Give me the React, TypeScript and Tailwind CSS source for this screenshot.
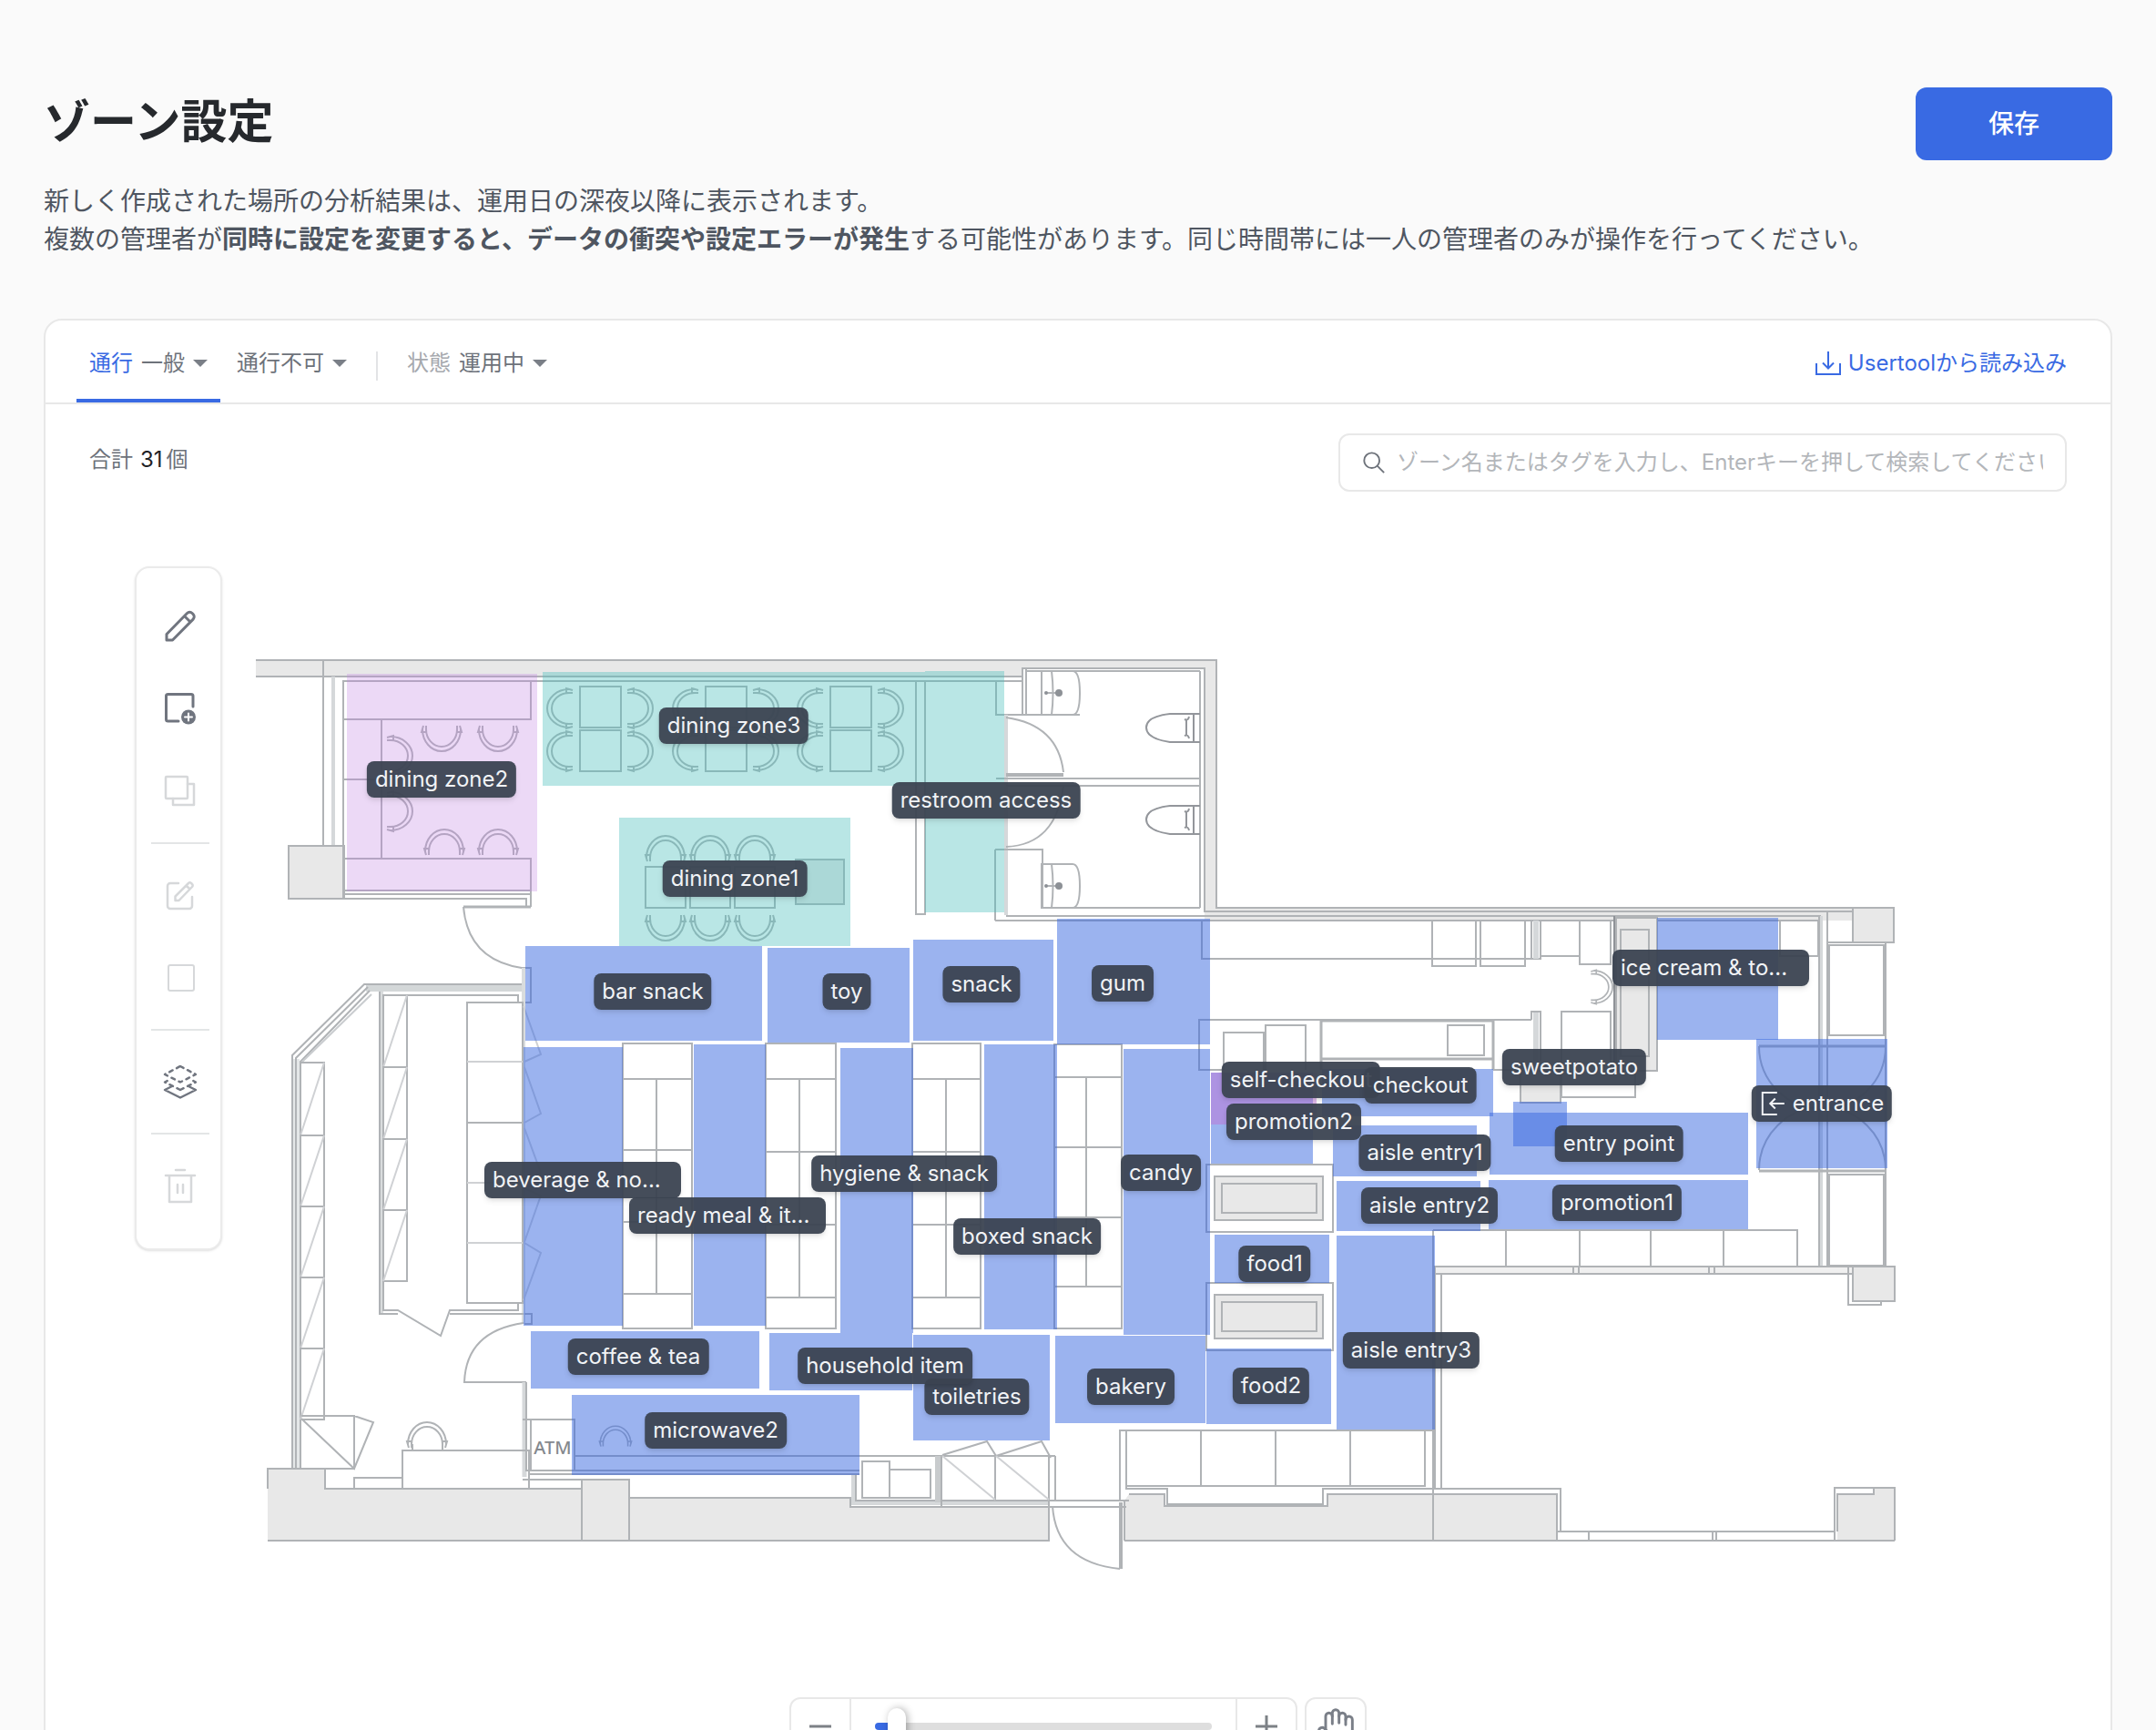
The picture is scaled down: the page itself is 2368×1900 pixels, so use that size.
import { useState, type ReactNode } from "react";
import { Hand } from "lucide-react";
import clsx from "clsx";

// Plan coordinates: the floor plan, the zones and the labels all share this origin.
const ORIGIN_X = 274;
const ORIGIN_Y = 700;

type Tone = "blue" | "pink" | "teal" | "violet";

type Zone = {
  name: string;
  tone: Tone;
  // left, top, right, bottom
  box: [number, number, number, number];
  // centre of the label
  label: [number, number];
  entrance?: boolean;
};

const ZONES: Zone[] = [
  { name: "dining zone2", tone: "pink", box: [381, 740, 590, 979], label: [485, 856] },
  { name: "dining zone3", tone: "teal", box: [596, 738, 1016, 863], label: [806, 797] },
  { name: "dining zone1", tone: "teal", box: [680, 898, 934, 1039], label: [807, 965] },
  { name: "restroom access", tone: "teal", box: [1016, 737, 1103, 1002], label: [1083, 879] },
  { name: "bar snack", tone: "blue", box: [577, 1039, 837, 1143], label: [717, 1089] },
  { name: "toy", tone: "blue", box: [843, 1041, 999, 1145], label: [930, 1089] },
  { name: "snack", tone: "blue", box: [1003, 1032, 1157, 1143], label: [1078, 1081] },
  { name: "gum", tone: "blue", box: [1161, 1009, 1329, 1147], label: [1233, 1080] },
  { name: "beverage & noodle", tone: "blue", box: [575, 1150, 684, 1456], label: [640, 1296] },
  { name: "ready meal & items", tone: "blue", box: [762, 1147, 841, 1456], label: [799, 1335] },
  { name: "hygiene & snack", tone: "blue", box: [923, 1151, 1003, 1464], label: [993, 1289] },
  { name: "boxed snack", tone: "blue", box: [1081, 1147, 1161, 1460], label: [1128, 1358] },
  { name: "candy", tone: "blue", box: [1234, 1152, 1329, 1466], label: [1275, 1288] },
  { name: "coffee & tea", tone: "blue", box: [583, 1462, 834, 1525], label: [701, 1490] },
  { name: "toiletries", tone: "blue", box: [1003, 1466, 1153, 1582], label: [1073, 1534] },
  { name: "household item", tone: "blue", box: [845, 1464, 1002, 1527], label: [972, 1500] },
  { name: "bakery", tone: "blue", box: [1159, 1467, 1324, 1563], label: [1242, 1523] },
  { name: "microwave2", tone: "blue", box: [628, 1532, 944, 1620], label: [786, 1571] },
  { name: "food1", tone: "blue", box: [1334, 1356, 1460, 1409], label: [1400, 1388] },
  { name: "food2", tone: "blue", box: [1325, 1481, 1462, 1564], label: [1396, 1522] },
  { name: "aisle entry3", tone: "blue", box: [1468, 1357, 1576, 1570], label: [1550, 1483] },
  { name: "promotion2", tone: "blue", box: [1330, 1178, 1442, 1278], label: [1421, 1232] },
  { name: "self-checkout", tone: "violet", box: [1330, 1178, 1446, 1235], label: [1429, 1186] },
  { name: "checkout", tone: "blue", box: [1452, 1174, 1640, 1226], label: [1560, 1192] },
  { name: "aisle entry1", tone: "blue", box: [1464, 1236, 1622, 1292], label: [1565, 1266] },
  { name: "aisle entry2", tone: "blue", box: [1468, 1297, 1626, 1352], label: [1570, 1324] },
  { name: "sweetpotato", tone: "blue", box: [1662, 1210, 1721, 1259], label: [1729, 1172] },
  { name: "entry point", tone: "blue", box: [1636, 1222, 1920, 1290], label: [1778, 1256] },
  { name: "promotion1", tone: "blue", box: [1635, 1296, 1920, 1350], label: [1776, 1321] },
  { name: "ice cream & topping", tone: "blue", box: [1820, 1008, 1953, 1142], label: [1879, 1063] },
  { name: "entrance", tone: "blue", box: [1929, 1141, 2073, 1283], label: [2001, 1212], entrance: true },
];

// Long names are cut on the map.
const SHORT_NAMES: Record<string, string> = {
  "beverage & noodle": "beverage & no...",
  "ready meal & items": "ready meal & it...",
  "ice cream & topping": "ice cream & to...",
};

const TONE_CLASS: Record<Tone, string> = {
  blue: "fill-[#3867df]/50",
  pink: "fill-[#c080e0]/30",
  teal: "fill-[#50c0be]/40",
  violet: "fill-[#bf74d6]/50",
};

function Chair({ x, y, turn, size = 1 }: { x: number; y: number; turn: number; size?: number }) {
  return (
    <g transform={`translate(${x} ${y}) rotate(${turn}) scale(${size})`}>
      <path d="M-21 2A21 24 0 0 0 21 2M-17 2A17 19 0 0 0 17 2M-17-2V5H-22L-20-2M17-2V5H22L20-2" />
    </g>
  );
}

function Box({ b, solid }: { b: [number, number, number, number]; solid?: boolean }) {
  return (
    <rect
      x={b[0]}
      y={b[1]}
      width={b[2] - b[0]}
      height={b[3] - b[1]}
      className={solid ? "fill-[#e8e8e8]" : undefined}
    />
  );
}

/** A column of shelf cells, each with its diagonal. */
function Shelf({ left, right, rows }: { left: number; right: number; rows: number[] }) {
  return (
    <>
      {rows.slice(1).map((bottom, i) => (
        <g key={bottom}>
          <Box b={[left, rows[i], right, bottom]} />
          <path className="stroke-[#cfd1d4]" d={`M${left} ${bottom}L${right} ${rows[i]}`} />
        </g>
      ))}
    </>
  );
}

function Gondola({ left, right, mid, rows }: { left: number; right: number; mid: number; rows: number[] }) {
  const last = rows.length - 1;
  return (
    <>
      <Box b={[left, rows[0], right, rows[last]]} />
      {rows.slice(1, last).map((y) => (
        <path key={y} d={`M${left} ${y}H${right}`} />
      ))}
      <path d={`M${mid} ${rows[1]}V${rows[last - 1]}`} />
    </>
  );
}

function Sink({ y }: { y: number }) {
  return (
    <g>
      <path d={`M1144 ${y}H1178Q1186 ${y} 1186 ${y + 24}T1178 ${y + 48}H1144ZM1155 ${y}Q1158 ${y + 24} 1155 ${y + 48}`} />
      <path d={`M1149 ${y + 24}H1163`} />
      <circle cx="1163" cy={y + 24} r="4" className="fill-[#8d9196] stroke-none" />
      <circle cx="1149" cy={y + 24} r="2" className="fill-[#8d9196] stroke-none" />
    </g>
  );
}

function Toilet({ y }: { y: number }) {
  return (
    <path
      className="stroke-[#93969b]"
      d={`M1318 ${y - 15}H1285Q1259 ${y - 12} 1259 ${y}T1285 ${y + 16}H1318M1311 ${y - 15}V${y + 16}M1301 ${y - 9}Q1305 ${y - 7} 1306 ${y - 12}M1301 ${y + 9}Q1305 ${y + 7} 1306 ${y + 12}M1303 ${y - 8}V${y + 8}`}
    />
  );
}

function FloorPlan() {
  return (
    <g className="fill-none stroke-[#b0b3b6]" strokeWidth="2">
      {/* outer walls */}
      <g className="fill-[#e8e8e8] stroke-none">
        <path d="M281 725H1336V997H2080V1011H1323V734H1123V743H281Z" />
        <path d="M294 1613H357V1635H639V1625H691V1645H934V1655H1152V1692H294Z" />
        <path d="M1235 1692V1648L1240 1641H1279V1654H1458V1641H1710V1692Z" />
        <path d="M2018 1641H2058V1634H2081V1691H2018Z" />
      </g>
      <path d="M281 725H1336V997H2080M281 743H1123V734H1323V1001H2036M1318 737V997M1127 737H1318M1145 997H1318M355 725V929M1105 1006H2000M1093 1011H2000" />
      <path className="stroke-[#d5d8da]" strokeWidth="4" d="M366 743V929" />
      <Box b={[317, 929, 378, 987]} solid />

      {/* dining room, left */}
      <path d="M377 987V748H1123M377 982H583M377 987H578V996M583 943V996M419 790V943M377 856H419" />
      <Box b={[377, 748, 583, 790]} />
      <Box b={[377, 943, 583, 978]} />
      <path strokeWidth="3" d="M509 996H583" />
      <path d="M509 996Q514 1054 573 1063H583V1101H573" />
      <Chair x={485} y={799} turn={0} />
      <Chair x={547} y={799} turn={0} />
      <Chair x={488} y={937} turn={180} />
      <Chair x={547} y={937} turn={180} />
      <Chair x={427} y={830} turn={-90} />
      <Chair x={427} y={891} turn={-90} />

      {/* dining room, top */}
      {[637, 775, 912].map((x) => (
        <g key={x}>
          <Box b={[x, 754, x + 45, 799]} />
          <Box b={[x, 802, x + 45, 847]} />
          <Chair x={x - 10} y={778} turn={90} />
          <Chair x={x - 10} y={825} turn={90} />
          <Chair x={x + 54} y={778} turn={-90} />
          <Chair x={x + 54} y={825} turn={-90} />
        </g>
      ))}
      {[709, 758, 807].map((x) => (
        <g key={x}>
          <Box b={[x, 952, x + 44, 997]} />
          <Chair x={x + 22} y={944} turn={180} />
          <Chair x={x + 22} y={1007} turn={0} />
        </g>
      ))}
      <Box b={[874, 944, 927, 993]} solid />
      <Box b={[1006, 748, 1016, 1004]} />

      {/* restrooms */}
      <path d="M1094 748V785H1186M1123 734V785M1127 734V785M1144 737V785" />
      <Sink y={737} />
      <Sink y={949} />
      <Toilet y={799} />
      <Toilet y={900} />
      <path className="stroke-[#d5d8da]" strokeWidth="4" d="M1105 785V1005" />
      <path d="M1105 788Q1162 796 1168 848M1094 855H1318M1105 863H1318M1168 863Q1160 928 1105 930" />
      <path strokeWidth="4" d="M1105 851H1168" />
      <path d="M1093 933H1145V997M1093 933V1011" />

      {/* back room */}
      <path className="stroke-[#d3d7d8]" strokeWidth="8" d="M574 1085H402" />
      <path className="stroke-[#e4e7e8]" strokeWidth="8" d="M325 1163V1613" />
      <path d="M321 1613V1159L400 1081H574M404 1084L325 1162V1613M406 1088L330 1166V1613" />
      <path className="stroke-[#c9cccf]" d="M408 1092L330 1168" />
      <path className="stroke-[#d9dcdd]" strokeWidth="4" d="M419 1089V1443M575 1063V1454" />
      <path d="M417 1089V1443H437M421 1093V1439H437L484 1467L494 1439H569V1432M494 1443H575M421 1093H569V1101" />
      <Shelf left={330} right={356} rows={[1167, 1247, 1325, 1403, 1481, 1559]} />
      <Shelf left={421} right={447} rows={[1093, 1172, 1251, 1329, 1407]} />
      <path d="M331 1555H389V1613H331M389 1555L410 1562L389 1613L331 1558" />
      <Box b={[513, 1101, 574, 1431]} />
      <path className="stroke-[#cfd1d4]" d="M513 1166H574M513 1299H574M513 1365H574M575 1105L594 1158L576 1166M576 1172L594 1223L576 1233M576 1239L594 1288L576 1299M576 1305L594 1313L576 1364M576 1365L594 1376L575 1428" />
      <path d="M513 1233H574M576 1443H584V1454H576M575 1453Q512 1462 510 1518H578" />
      <path className="stroke-[#d5d8da]" strokeWidth="5" d="M576 1518V1622" />
      <path d="M578 1518V1615H944M574 1559H583M580 1619H944M574 1625H639" />
      <Box b={[583, 1559, 631, 1615]} />
      <text
        x="607"
        y="1597"
        textAnchor="middle"
        className="fill-[#85898e] stroke-none font-['Noto_Sans',sans-serif] text-[20px] font-medium"
      >
        ATM
      </text>
      <Chair x={469} y={1588} turn={180} />
      <path d="M453 1586V1593M486 1586V1593" />
      <Chair x={676} y={1587} turn={180} size={0.8} />
      <path d="M442 1635V1593H581V1635M389 1635V1623H442M631 1599H1159" />

      {/* lower wall */}
      <path d="M294 1635V1613H357V1635H639V1625H691V1645H934V1655H1237M294 1692H1152V1650M639 1625V1692M691 1645V1692M940 1618V1648H1240" />
      <path className="stroke-[#d5d8da]" strokeWidth="4" d="M937 1620V1651H1152" />
      <Box b={[947, 1605, 977, 1645]} />
      <Box b={[977, 1614, 1022, 1645]} />
      <path className="stroke-[#c8cbcd]" strokeWidth="6" d="M1030 1599V1650" />
      <path d="M1034 1599V1655M1093 1599V1647M1152 1599V1655M1159 1599V1648M1035 1598L1084 1583L1094 1599L1144 1583L1154 1601" />
      <path className="stroke-[#cfd1d4]" d="M1035 1599L1093 1647M1094 1599L1152 1647" />
      <path d="M1156 1654Q1160 1716 1230 1723M1230 1650V1723M1232 1650V1723" />
      <path d="M1230 1648V1571H1574M1237 1571V1635H1282V1652H1453V1635H1714V1682M1237 1632H1566M1319 1571V1632M1401 1571V1632M1483 1571V1632M1565 1571V1632" />
      <path d="M1235 1692V1648M1240 1641H1279V1654H1458V1641H1710V1692M1235 1692H2081M1574 1635V1692M1710 1682H2015M1745 1682V1692M1881 1682V1692M1885 1682V1692" />
      <path d="M2015 1692V1634H2081V1692M2018 1682V1641H2058V1634" />

      {/* gondolas */}
      <Gondola left={684} right={760} mid={721} rows={[1146, 1185, 1263, 1342, 1421, 1459]} />
      <Gondola left={841} right={918} mid={878} rows={[1146, 1185, 1265, 1345, 1425, 1459]} />
      <Gondola left={1002} right={1077} mid={1039} rows={[1146, 1185, 1265, 1345, 1425, 1459]} />
      <Gondola left={1158} right={1232} mid={1193} rows={[1147, 1183, 1260, 1337, 1413, 1459]} />

      {/* counters */}
      <path d="M1320 1011V1053H1692V1011" />
      <Box b={[1573, 1011, 1621, 1061]} />
      <Box b={[1626, 1011, 1675, 1061]} />
      <path className="stroke-[#d5d8da]" strokeWidth="6" d="M1687 1011V1053M1687 1111V1165" />
      <path d="M1682 1011V1053M1692 1011V1050H1735M1735 1011V1059H1769V1011M1682 1120V1111H1692V1165" />
      <rect x="1775" y="1008" width="45" height="168" className="fill-[#e8e8e8]" />
      <Box b={[1780, 1021, 1811, 1160]} />
      <path className="stroke-[#8f9297]" d="M1773 1006V1176" />
      <Chair x={1749} y={1084} turn={-90} size={0.85} />
      <path d="M1715 1205V1111H1769V1176M1715 1205H1796V1176" />
      <Box b={[1670, 1176, 1714, 1211]} solid />
      <path d="M1682 1120H1317V1175H1342M1640 1175H1670" />
      <path d="M1344 1175V1134H1388V1175M1390 1175V1126H1434V1175" />
      <path strokeWidth="3" d="M1451 1175V1121H1640V1175M1451 1163H1640" />
      <Box b={[1590, 1126, 1630, 1159]} />
      {[1279, 1409].map((y) => (
        <g key={y}>
          <Box b={[1325, y, 1464, y + 74]} />
          <Box b={[1334, y + 13, 1453, y + 61]} solid />
          <Box b={[1342, y + 21, 1446, y + 53]} solid />
        </g>
      ))}

      {/* entrance side */}
      <path className="stroke-[#d5d8da]" strokeWidth="4" d="M2000 1006V1399" />
      <path d="M1955 1011V1050H1997V1011M1998 1006V1399M2007 1000V1391M2007 1035H2071V1391" />
      <Box b={[2035, 997, 2080, 1035]} solid />
      <Box b={[2009, 1038, 2069, 1137]} />
      <Box b={[2009, 1290, 2069, 1390]} />
      <path strokeWidth="3" d="M1932 1149H2072M1932 1286H2072" />
      <path d="M1932 1149A69 69 0 0 0 2001 1218M2071 1149A69 69 0 0 1 2002 1218M1932 1285A69 69 0 0 1 2001 1216M2071 1285A69 69 0 0 0 2002 1216" />
      <path d="M1574 1351H1974V1390M1654 1351V1390M1735 1351V1390M1813 1351V1390M1893 1351V1390M1574 1351V1692" />
      <rect x="1576" y="1391" width="459" height="8" className="fill-[#f0f0f0]" />
      <path d="M1728 1391V1399H1734V1391M1877 1391V1399H1883V1391M1576 1399V1635M1583 1399V1635M2030 1391V1433H2066V1429" />
      <Box b={[2035, 1391, 2081, 1429]} solid />
    </g>
  );
}

function ZoneLabel({ zone }: { zone: Zone }) {
  return (
    <button
      type="button"
      title={zone.name}
      className={clsx(
        "absolute flex h-10 -translate-x-1/2 -translate-y-1/2 items-center gap-2 rounded-lg bg-[#3b4351]/95 px-[9px] text-[24px] leading-10 whitespace-nowrap text-[#f1f3f6] shadow-md",
        SHORT_NAMES[zone.name] && "w-[216px]",
      )}
      style={{ left: zone.label[0] - ORIGIN_X, top: zone.label[1] - ORIGIN_Y }}
    >
      {zone.entrance && (
        <svg viewBox="0 0 28 28" className="size-7 fill-none stroke-current" strokeWidth="2">
          <path d="M19 2H3V26H19M27 14H12M17 8.500L11.500 14L17 19.500" />
        </svg>
      )}
      {SHORT_NAMES[zone.name] ?? zone.name}
    </button>
  );
}

function ToolButton({ label, muted, children }: { label: string; muted?: boolean; children: ReactNode }) {
  return (
    <button
      type="button"
      aria-label={label}
      disabled={muted}
      className={clsx("flex h-[70px] w-full items-center justify-center", muted ? "text-[#d6d8da]" : "text-[#70757f]")}
    >
      <svg
        viewBox="0 0 40 40"
        className="size-10 fill-none stroke-current"
        strokeWidth="2.500"
        strokeLinecap="round"
        strokeLinejoin="round"
      >
        {children}
      </svg>
    </button>
  );
}

function Toolbar() {
  return (
    <div className="absolute top-[82px] left-[98px] flex w-24 flex-col items-center gap-[21px] rounded-2xl border-2 border-[#ebebeb] bg-white pt-7 pb-[34px] pl-1 shadow-sm">
      <ToolButton label="描画">
        <path strokeWidth="3" d="M5 36V29.500L27.500 6.500a4 4 0 0 1 5.600 0l1 1a4 4 0 0 1 0 5.600L11.500 36ZM24.500 9.500l6.500 6.500" />
      </ToolButton>
      <ToolButton label="ゾーンを追加">
        <path strokeWidth="3" d="M18 34H6.500a2 2 0 0 1-2-2V6.500a2 2 0 0 1 2-2H32a2 2 0 0 1 2 2V18" />
        <circle cx="29" cy="29.500" r="8" className="fill-current stroke-none" />
        <path className="stroke-white" strokeWidth="2" d="M29 25.500V33.500M25 29.500H33" />
      </ToolButton>
      <ToolButton label="複製" muted>
        <rect x="4" y="4" width="24" height="24" rx="1" />
        <path d="M28 12H35V35H12V28" />
      </ToolButton>
      <hr className="w-16 border-t-2 border-[#e3e5e6]" />
      <ToolButton label="編集" muted>
        <path d="M18 7H9a3 3 0 0 0-3 3V32a3 3 0 0 0 3 3H30a3 3 0 0 0 3-3V22" />
        <path d="M14.500 26V21.500L29 7a2 2 0 0 1 3 0l1 1a2 2 0 0 1 0 3L18.500 26ZM26.500 9.500L30.500 13.500" />
      </ToolButton>
      <ToolButton label="選択" muted>
        <rect x="7" y="6" width="28" height="28" rx="2" strokeWidth="2" />
      </ToolButton>
      <hr className="w-16 border-t-2 border-[#e3e5e6]" />
      <ToolButton label="レイヤー">
        <path strokeDasharray="4 5" d="M20 3L37 12L20 20.500L3 12Z" />
        <path strokeDasharray="4 5" d="M20 29L3 20.500L9 17.500M20 29L37 20.500L31 17.500" />
        <path d="M10 25.500L3 29L20 37.500L37 29L30 25.500" />
      </ToolButton>
      <hr className="w-16 border-t-2 border-[#e3e5e6]" />
      <ToolButton label="削除" muted>
        <path d="M15 3H25M4 9H36M8 9V38H32V9M17 19V28M23 19V28" />
      </ToolButton>
    </div>
  );
}

function Caret() {
  return (
    <svg viewBox="0 0 16 8" className="h-2 w-4 fill-[#7a7f87]" aria-hidden="true">
      <path d="M0 0H16L8 8Z" />
    </svg>
  );
}

function Picker({ id, label, value, active }: { id: string; label?: string; value: string; active?: boolean }) {
  return (
    <div
      className={clsx(
        "flex items-center gap-[9px] border-b-4 px-3.5 pt-2",
        active ? "border-[#396ae3]" : "border-transparent",
      )}
    >
      {label && (
        <label htmlFor={id} className={active ? "text-[#396ae3]" : "text-[#a6a9ae]"}>
          {label}
        </label>
      )}
      <select
        id={id}
        aria-label={label ? undefined : value}
        className="appearance-none bg-transparent [field-sizing:content]"
      >
        <option>{value}</option>
      </select>
      <Caret />
    </div>
  );
}

export default function App() {
  const [zoom, setZoom] = useState(4);

  return (
    <main className="flex h-screen flex-col overflow-hidden bg-[#fafafa] px-12 pt-24 font-['Inter','Noto_Sans_CJK_JP',sans-serif] text-[24px] text-[#6d727a]">
      <header className="flex h-20 shrink-0 items-center justify-between">
        <h1 className="pb-1 text-[51px] font-bold text-[#26292d]">ゾーン設定</h1>
        <button type="button" className="h-20 w-[216px] rounded-xl bg-[#396ae3] text-[28px] font-medium text-white">
          保存
        </button>
      </header>
      <p className="mt-6 text-[28px] leading-[42px] text-[#4f5661]">
        新しく作成された場所の分析結果は、運用日の深夜以降に表示されます。
        <br />
        複数の管理者が<strong className="font-bold">同時に設定を変更すると、データの衝突や設定エラーが発生</strong>
        する可能性があります。同じ時間帯には一人の管理者のみが操作を行ってください。
      </p>

      <section className="mt-[66px] shrink-0 rounded-[20px] border-2 border-[#e8e8e8] bg-white">
        <nav className="flex h-[92px] items-stretch border-b-2 border-[#e8e8e8] pr-12 pl-[34px]">
          <Picker id="pass" label="通行" value="一般" active />
          <div className="ml-1 flex">
            <Picker id="blocked" value="通行不可" />
          </div>
          <div className="mx-[18px] mt-[34px] h-8 w-0.5 bg-[#e3e4e6]" />
          <Picker id="state" label="状態" value="運用中" />
          <a href="#import" className="ml-auto flex items-center gap-2 pt-1 text-[#396ae3]">
            <svg viewBox="0 0 28 28" className="size-7 fill-none stroke-current" strokeWidth="2">
              <path d="M1 14V26H27V14M14 1V19M8 13.500L14 19.500L20 13.500" />
            </svg>
            Usertoolから読み込み
          </a>
        </nav>

        <div className="flex items-start justify-between px-12 pt-8">
          <p className="flex leading-[58px]">
            合計<span className="mr-1 ml-2 text-[#1f2226]">31</span>個
          </p>
          <label className="flex h-16 w-[800px] items-center gap-3 rounded-xl border-2 border-[#e8e8e8] pr-6 pl-6">
            <svg viewBox="0 0 28 28" className="size-[26px] shrink-0 fill-none stroke-[#6d727a]" strokeWidth="2">
              <circle cx="11.500" cy="11.500" r="9" />
              <path d="M18 18L26 26" />
            </svg>
            <input
              type="text"
              aria-label="検索"
              placeholder="ゾーン名またはタグを入力し、Enterキーを押して検索してください"
              className="min-w-0 flex-1 outline-none placeholder:text-[#b3b6ba]"
            />
          </label>
        </div>

        <div className="relative pt-40">
          <div className="relative mx-auto h-[1040px] w-[1820px]">
            <svg viewBox={`${ORIGIN_X} ${ORIGIN_Y} 1820 1040`} className="h-[1040px] w-[1820px]" aria-hidden="true">
              <FloorPlan />
              {ZONES.map(({ name, tone, box: [left, top, right, bottom] }) => (
                <rect key={name} x={left} y={top} width={right - left} height={bottom - top} className={TONE_CLASS[tone]} />
              ))}
            </svg>
            {ZONES.map((zone) => (
              <ZoneLabel key={zone.name} zone={zone} />
            ))}
          </div>

          <Toolbar />

          <div className="mt-[124px] mb-16 flex h-16 justify-center gap-2">
            <div className="flex rounded-xl border-2 border-[#e8e8e8] text-[#7d8186]">
              <button
                type="button"
                aria-label="縮小"
                onClick={() => setZoom(Math.max(0, zoom - 5))}
                className="flex w-16 items-center justify-center"
              >
                <svg viewBox="0 0 24 24" className="size-6 stroke-current" strokeWidth="3">
                  <path d="M0 12H24" />
                </svg>
              </button>
              <div className="flex items-center border-x-2 border-[#e8e8e8] px-[26px]">
                <input
                  type="range"
                  aria-label="ズーム"
                  min={0}
                  max={100}
                  value={zoom}
                  onChange={(e) => setZoom(Number(e.target.value))}
                  className="h-2 w-[370px] appearance-none rounded-full bg-[#dedede] [&::-webkit-slider-thumb]:h-10 [&::-webkit-slider-thumb]:w-5 [&::-webkit-slider-thumb]:appearance-none [&::-webkit-slider-thumb]:rounded-full [&::-webkit-slider-thumb]:bg-white [&::-webkit-slider-thumb]:shadow-[2px_0_8px_rgba(0,0,0,0.3)]"
                  style={{ backgroundImage: `linear-gradient(to right, #396ae3 ${zoom + 2}%, transparent 0)` }}
                />
              </div>
              <button
                type="button"
                aria-label="拡大"
                onClick={() => setZoom(Math.min(100, zoom + 5))}
                className="flex w-16 items-center justify-center"
              >
                <svg viewBox="0 0 24 24" className="size-6 stroke-current" strokeWidth="3">
                  <path d="M0 12H24M12 0V24" />
                </svg>
              </button>
            </div>
            <button
              type="button"
              aria-label="移動"
              className="flex w-[68px] items-center justify-center rounded-xl border-2 border-[#e8e8e8] text-[#7a7f88]"
            >
              <Hand className="size-11" strokeWidth={1.600} />
            </button>
          </div>
        </div>
      </section>
    </main>
  );
}
